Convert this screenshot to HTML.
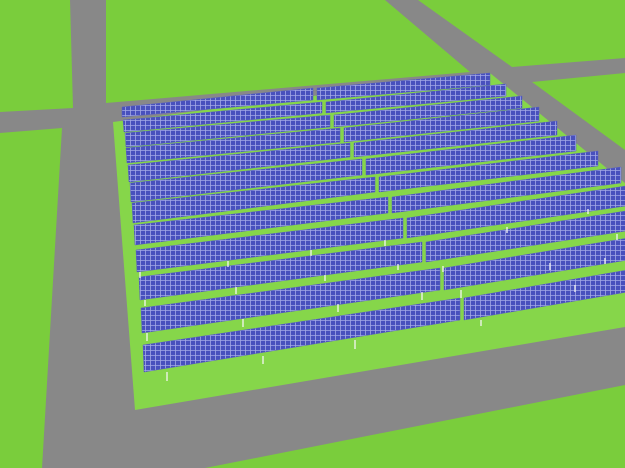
<!DOCTYPE html>
<html><head><meta charset="utf-8"><style>html,body{margin:0;padding:0;overflow:hidden;background:#8a8a8a}svg{display:block}</style></head>
<body>
<svg width="625" height="468" viewBox="0 0 625 468" xmlns="http://www.w3.org/2000/svg">
<defs>
<pattern id="p" width="5" height="5" patternUnits="userSpaceOnUse">
<rect width="5" height="5" fill="#4850bd"/>
<path d="M0.4 0V5M0 0.4H5" stroke="#a2a8e6" stroke-width="0.8"/>
</pattern>
</defs>
<rect width="625" height="468" fill="#888888"/>
<g fill="#7acd3c">
<polygon points="106,0 385,0 470,72 106,103"/>
<polygon points="418,0 625,0 625,58 512,67"/>
<polygon points="532,82 625,73 625,150"/>
<polygon points="0,0 70,0 73,108 0,112"/>
<polygon points="0,133 62,128 42,468 0,468"/>
<polygon points="205,468 625,385 625,468"/>
</g>
<polygon points="113,122 490,73 625,183 625,327 135,410" fill="#86d64a"/>
<g fill="url(#p)" stroke="#5a62c0" stroke-width="0.5">
<polygon points="122,107 313,88 313,100 122,117"/>
<polygon points="123,120 322,102 322,113 124,132"/>
<polygon points="125,133 330,115 330,127 126,147"/>
<polygon points="126,148 340,128 340,142 127,163"/>
<polygon points="128,165 350,143 350,157 129,182"/>
<polygon points="130,183 362,159 362,175 131,202"/>
<polygon points="132,203 375,177 375,192 133,223"/>
<polygon points="134,225 388,197 388,213 135,245"/>
<polygon points="136,250 403,218 403,238 137,272"/>
<polygon points="139,277 422,242 422,262 140,300"/>
<polygon points="141,308 440,268 440,290 142,333"/>
<polygon points="143,345 460,298 460,320 144,372"/>
<polygon points="317,88 490,73 490,85 317,100"/>
<polygon points="326,102 506,84 506,96 326,113"/>
<polygon points="334,115 522,96 522,108 334,127"/>
<polygon points="344,128 539,107 539,121 344,142"/>
<polygon points="354,143 557,121 557,135 354,157"/>
<polygon points="366,159 576,135 576,151 366,175"/>
<polygon points="379,177 598,151 598,166 379,192"/>
<polygon points="392,197 621,167 621,183 392,213"/>
<polygon points="407,218 660,181 660,201 407,238"/>
<polygon points="426,242 690,201 690,221 426,262"/>
<polygon points="444,268 720,223 720,245 444,290"/>
<polygon points="464,298 750,249 750,271 464,320"/>
</g>
<g stroke="#f4f4f4" stroke-width="1.3">
<path d="M167,372V381M263,356V364M355,340V349M147,333V341M243,319V327M338,304V312M422,292V300M145,300V306M236,287V294M325,275V281M398,264V270M140,272V278M228,261V267M311,250V256M385,240V246M461,290V298M481,320V326M550,263V270M575,285V292M605,258V264M617,234V240M588,209V214M507,227V233M443,266V272"/>
</g>
</svg>
</body></html>
